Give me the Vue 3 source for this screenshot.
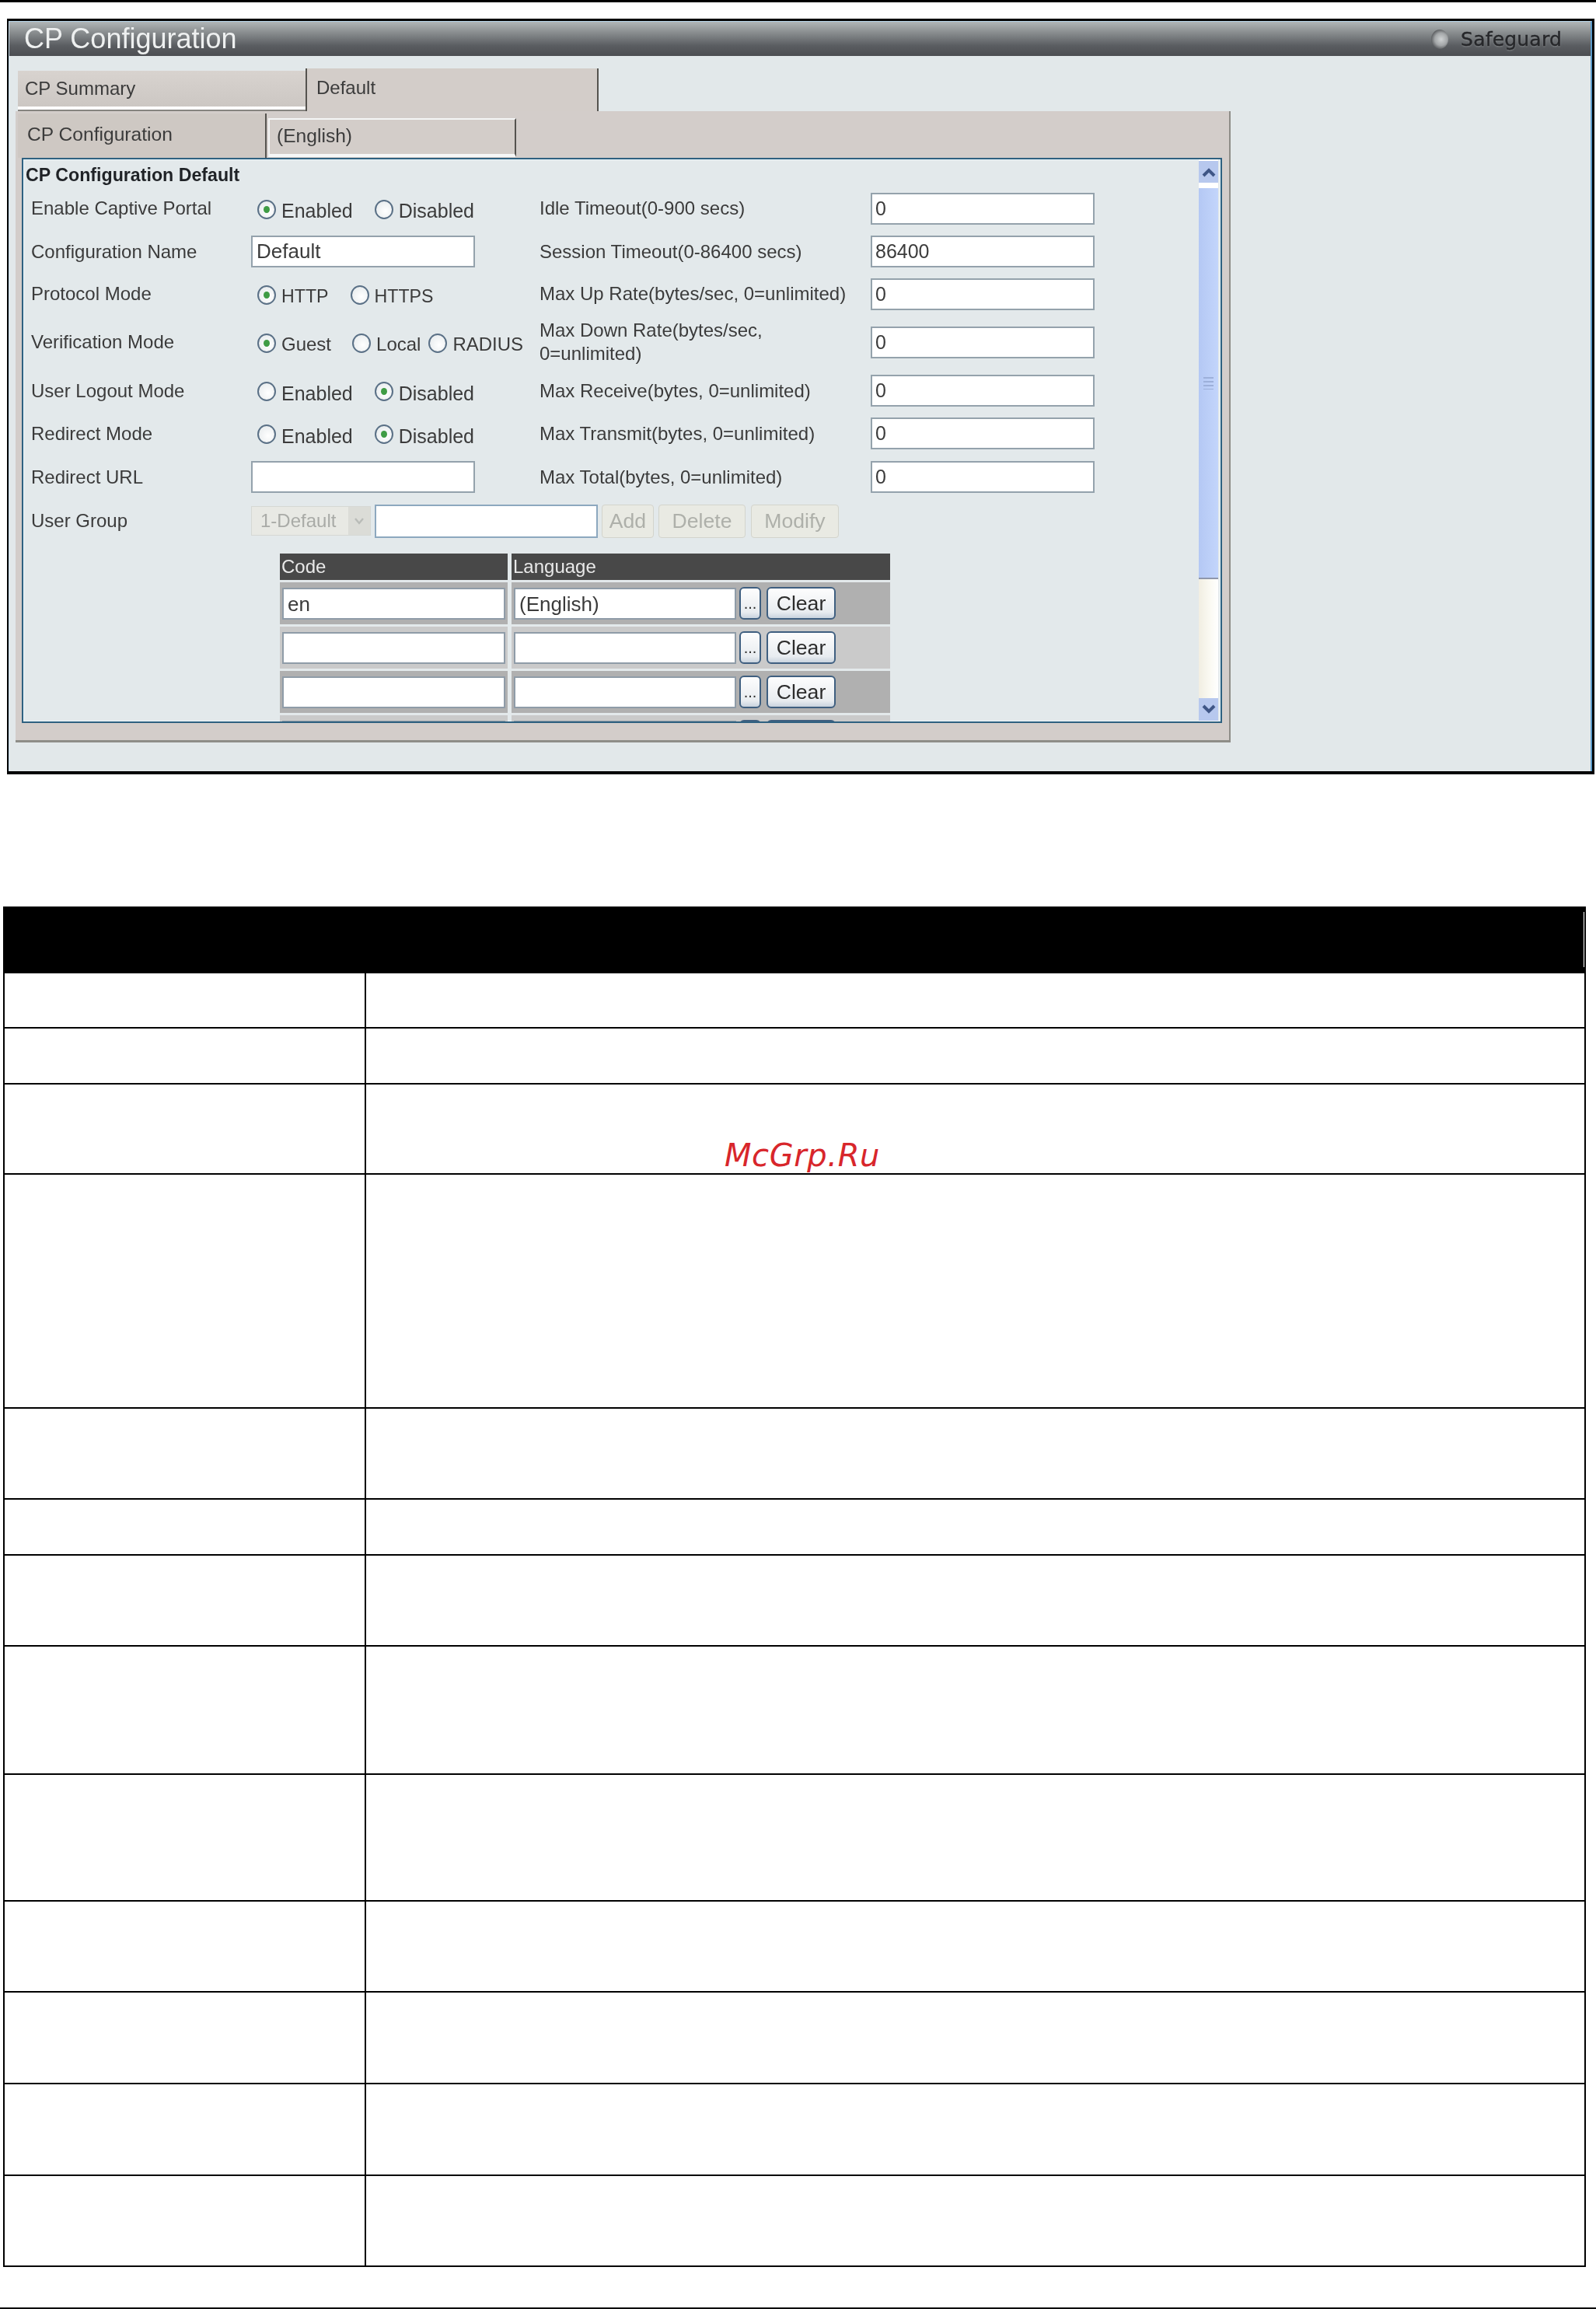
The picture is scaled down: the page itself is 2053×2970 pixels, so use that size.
<script setup>
const rightFields = [
  { label: 'Idle Timeout(0-900 secs)', value: '0' },
  { label: 'Session Timeout(0-86400 secs)', value: '86400' },
  { label: 'Max Up Rate(bytes/sec, 0=unlimited)', value: '0' },
  { label: 'Max Down Rate(bytes/sec,\n0=unlimited)', value: '0' },
  { label: 'Max Receive(bytes, 0=unlimited)', value: '0' },
  { label: 'Max Transmit(bytes, 0=unlimited)', value: '0' },
  { label: 'Max Total(bytes, 0=unlimited)', value: '0' },
]
const leftRows = [
  { label: 'Enable Captive Portal', radios: [{ t: 'Enabled', on: true }, { t: 'Disabled' }] },
  { label: 'Configuration Name', input: 'Default' },
  { label: 'Protocol Mode', cls: 'proto', radios: [{ t: 'HTTP', on: true }, { t: 'HTTPS' }] },
  { label: 'Verification Mode', cls: 'verify', radios: [{ t: 'Guest', on: true }, { t: 'Local' }, { t: 'RADIUS' }] },
  { label: 'User Logout Mode', radios: [{ t: 'Enabled' }, { t: 'Disabled', on: true }] },
  { label: 'Redirect Mode', radios: [{ t: 'Enabled' }, { t: 'Disabled', on: true }] },
  { label: 'Redirect URL', input: '' },
]
const formRows = leftRows.map((row, i) => ({ ...row, right: rightFields[i] }))
const langRows = [
  { code: 'en', lang: '(English)', dark: true },
  { code: '', lang: '' },
  { code: '', lang: '', dark: true },
  { code: '', lang: '' },
]
const docRows = [71, 72, 116, 301, 117, 72, 117, 165, 163, 117, 118, 118, 117]
</script>

<template>
  <div class="page">
    <div class="rule rule-top"></div>

    <section class="frame">
      <div class="frame-inner">
        <header class="titlebar">
          <h1 class="title">CP Configuration</h1>
          <div class="brand">
            <span class="brand-dot"></span>
            <span class="brand-text">Safeguard</span>
          </div>
        </header>

        <div class="tabs-main">
          <div class="tab tab-summary">CP Summary</div>
          <div class="tab tab-default">Default</div>
        </div>

        <div class="panel">
          <div class="tabs-sub">
            <div class="tab tab-conf">CP Configuration</div>
            <div class="tab tab-eng">(English)</div>
          </div>

          <div class="scroller">
            <div class="content">
              <div class="heading">CP Configuration Default</div>

              <div class="form">
                <template v-for="row in formRows" :key="row.label">
                  <div class="lbl">{{ row.label }}</div>
                  <div class="ctl">
                    <input v-if="row.input !== undefined" class="field field-left" :value="row.input" />
                    <div v-else class="radios" :class="row.cls">
                      <label v-for="r in row.radios" :key="r.t" class="radio">
                        <span class="dot" :class="{ on: r.on }"></span>
                        <span>{{ r.t }}</span>
                      </label>
                    </div>
                  </div>
                  <div class="lbl lbl-right">{{ row.right.label }}</div>
                  <div class="ctl">
                    <input class="field field-right" :value="row.right.value" />
                  </div>
                </template>
                <div class="lbl">User Group</div>
                <div class="ctl group-ctl">
                  <div class="select">
                    <span class="select-val">1-Default</span>
                    <span class="select-arrow">
                      <svg width="14" height="10" viewBox="0 0 14 10"><path d="M2 2l5 6 5-6" fill="none" stroke="#b9bcb8" stroke-width="2.4" /></svg>
                    </span>
                  </div>
                  <input class="field field-group" value="" />
                  <button class="btn-off btn-add" disabled>Add</button>
                  <button class="btn-off btn-del" disabled>Delete</button>
                  <button class="btn-off btn-mod" disabled>Modify</button>
                </div>
              </div>

              <div class="langs">
                <div class="lang-head">
                  <div class="lh lh-code">Code</div>
                  <div class="lh lh-lang">Language</div>
                </div>
                <div v-for="(r, i) in langRows" :key="i" class="lang-row" :class="{ dark: r.dark }">
                  <div class="lc lc-code">
                    <input class="field field-code" :value="r.code" />
                  </div>
                  <div class="lc lc-lang">
                    <input class="field field-lang" :value="r.lang" />
                    <button class="btn btn-more">...</button>
                    <button class="btn btn-clear">Clear</button>
                  </div>
                </div>
              </div>
            </div>

            <div class="scrollbar">
              <div class="sb-btn">
                <svg width="20" height="14" viewBox="0 0 20 14"><path d="M3 12l7-7 7 7" fill="none" stroke="#3f5686" stroke-width="4" /></svg>
              </div>
              <div class="sb-thumb"><span class="sb-grip"></span></div>
              <div class="sb-track"></div>
              <div class="sb-btn sb-btn-down">
                <svg width="20" height="14" viewBox="0 0 20 14"><path d="M3 2l7 7 7-7" fill="none" stroke="#3f5686" stroke-width="4" /></svg>
              </div>
            </div>
          </div>
        </div>
      </div>
    </section>

    <table class="doc">
      <thead>
        <tr class="doc-head"><th class="c1"></th><th class="c2"></th></tr>
      </thead>
      <tbody>
        <tr v-for="(h, i) in docRows" :key="i" :style="{ height: h + 'px' }">
          <td class="c1"></td>
          <td class="c2"></td>
        </tr>
      </tbody>
    </table>

    <div class="rule rule-bottom"></div>

    <div class="watermark">McGrp.Ru</div>
  </div>
</template>

<style>
html, body { margin: 0; background: #fff; }
</style>

<style scoped>
.page {
  position: relative;
  width: 2053px;
  height: 2970px;
  overflow: hidden;
  background: #fff;
  font-family: "Liberation Sans", Arial, sans-serif;
  color: #3b3b3b;
}
.rule { background: #000; }
.rule-top { height: 3px; }
.rule-bottom { height: 2px; margin-top: 52px; }

.frame {
  box-sizing: border-box;
  margin: 21px 0 0 9px;
  width: 2042px;
  height: 972px;
  border: solid #000;
  border-width: 3px 3px 4px 2px;
}
.frame-inner {
  box-sizing: border-box;
  height: 100%;
  background: #e2e8ea;
  border-top: 1px solid #b6d4e8;
  border-right: 2px solid #5b9ac9;
  border-left: 1px solid #c6dcec;
  filter: blur(0.5px);
}

.titlebar {
  height: 44px;
  display: flex;
  align-items: center;
  justify-content: space-between;
  padding: 0 37px 0 19px;
  background: linear-gradient(#b0b6b7 0%, #8b8f91 30%, #5a5d61 70%, #4c4e52 100%);
}
.title {
  margin: 0;
  font-size: 36px;
  font-weight: 400;
  color: #eef0f0;
  line-height: 44px;
}
.brand { display: flex; align-items: center; gap: 16px; }
.brand-dot {
  flex: none;
  width: 22px;
  height: 25px;
  border-radius: 50%;
  background: radial-gradient(circle at 58% 50%, #cfd2d3 0%, #a3a6a8 45%, #4c4e51 78%, #303236 100%);
}
.brand-text {
  font-family: "DejaVu Sans", sans-serif;
  font-size: 25px;
  line-height: 28px;
  letter-spacing: 0.2px;
  padding-top: 2px;
  color: #26272a;
  -webkit-text-stroke: 0.4px #26272a;
  text-shadow: 0 1px 2px #8d9092;
}

.tabs-main {
  display: flex;
  align-items: flex-end;
  height: 55px;
  margin: 16px 0 0 11px;
}
.tab {
  box-sizing: border-box;
  font-size: 24px;
  background: #d3cdc9;
  display: flex;
  align-items: center;
}
.tab-summary {
  width: 370px;
  height: 52px;
  padding: 0 0 4px 9px;
  background: linear-gradient(#d8d3cf, #cbc6c2);
  border-bottom: 2px solid #86847f;
  box-shadow: inset 0 -4px 0 #fff;
}
.tab-default {
  width: 377px;
  height: 55px;
  padding: 0 0 6px 12px;
  border-left: 2px solid #55534f;
  border-right: 2px solid #55534f;
}
.panel {
  box-sizing: border-box;
  margin-left: 8px;
  width: 1563px;
  height: 812px;
  padding-top: 3px;
  background: #d3cdca;
  border-right: 2px solid #8e8d88;
  border-bottom: 3px solid #8e8d88;
}
.tabs-sub {
  display: flex;
  align-items: flex-start;
  height: 57px;
  margin-left: 3px;
}
.tab-conf {
  width: 320px;
  height: 57px;
  font-size: 24.6px;
  padding: 0 0 4px 12px;
  background: #cec8c3;
  border-right: 2px solid #55534f;
}
.tab-eng {
  width: 319px;
  height: 50px;
  margin: 6px 0 0 2px;
  font-size: 24.6px;
  padding: 0 0 2px 9px;
  border-top: 2px solid #f4f5f5;
  border-left: 2px solid #f4f5f5;
  border-right: 2px solid #55534f;
  border-bottom: 4px solid #f6f7f7;
}

.scroller {
  box-sizing: border-box;
  display: flex;
  margin-left: 8px;
  width: 1544px;
  height: 727px;
  overflow: hidden;
  background: #e3e9eb;
  border: 2px solid #2f6180;
  box-shadow: inset 0 0 0 1px #e9f6fb;
}
.content {
  flex: 1;
  min-width: 0;
  overflow: hidden;
}
.heading {
  height: 35px;
  padding: 6px 0 0 3px;
  box-sizing: border-box;
  font-size: 23.2px;
  line-height: 28px;
  font-weight: 700;
  color: #1f2226;
}
.form {
  display: grid;
  grid-template-columns: 283px 371px 426px 288px;
  grid-template-rows: 56px 55px 54px 70px 55px 55px 57px 56px;
  align-items: center;
  margin-left: 10px;
}
.lbl {
  font-size: 24px;
  line-height: 30px;
  color: #3b3b3b;
}
.lbl-right { white-space: pre-line; }
.ctl { display: flex; align-items: center; }

.field {
  box-sizing: border-box;
  height: 41px;
  margin: 0;
  padding: 0 5px;
  background: #fff;
  border: 2px solid #94a2ac;
  border-radius: 0;
  outline: none;
  font-family: "Liberation Sans", Arial, sans-serif;
  font-size: 26px;
  color: #3b3b3b;
}
.field-left, .field-right { width: 288px; }
.field-right { font-size: 25px; padding-left: 4px; }
.field-group { width: 287px; height: 43px; margin-left: 5px; border-color: #8da8bf; }
.field-code { width: 287px; padding-top: 3px; border-color: #8f9ca8; }
.field-lang { width: 286px; padding-top: 3px; border-color: #8f9ca8; }

.radios {
  display: flex;
  gap: 28px;
  padding: 6px 0 0 8px;
}
.radio {
  display: flex;
  align-items: center;
  gap: 7px;
  font-size: 25px;
  line-height: 30px;
}
.radios.proto .radio { font-size: 23.2px; }
.radios.verify { gap: 27px; }
.radios.verify .radio { font-size: 24px; }
.radios.verify .radio:last-child { margin-left: -17px; }
.dot {
  box-sizing: border-box;
  flex: none;
  position: relative;
  width: 24px;
  height: 25px;
  margin-top: -4px;
  border-radius: 50%;
  border: 2px solid #5a7086;
  background: radial-gradient(circle at 60% 60%, #fff, #e3e8ea);
}
.dot.on::after {
  content: "";
  position: absolute;
  left: 6px;
  top: 6px;
  width: 8px;
  height: 9px;
  border-radius: 50%;
  background: #3f9c45;
}

.group-ctl { grid-column: 2 / 5; }
.select {
  box-sizing: border-box;
  display: flex;
  align-items: center;
  justify-content: space-between;
  width: 154px;
  height: 38px;
  background: #e8e9e4;
  border: 1px solid #d6d8d4;
  color: #a9aba7;
  font-size: 24px;
  padding-left: 11px;
}
.select-arrow {
  width: 28px;
  height: 36px;
  display: flex;
  align-items: center;
  justify-content: center;
  background: #dbdcd7;
}
.btn-off {
  box-sizing: border-box;
  height: 43px;
  padding: 0;
  background: #e9eae3;
  border: 1px solid #d3d4cc;
  border-radius: 4px;
  color: #aeb0aa;
  font-family: "Liberation Sans", Arial, sans-serif;
  font-size: 26.6px;
}
.btn-add { width: 67px; margin-left: 5px; }
.btn-del { width: 112px; margin-left: 6px; }
.btn-mod { width: 113px; margin-left: 7px; }

.langs { margin-left: 330px; margin-top: 14px; width: 785px; }
.lang-head { display: flex; gap: 5px; height: 34px; margin-bottom: 3px; }
.lh {
  background: #484848;
  color: #e9e9e9;
  font-size: 24px;
  line-height: 34px;
  padding-left: 2px;
  box-sizing: border-box;
}
.lh-code { width: 293px; }
.lh-lang { flex: 1; }
.lang-row { display: flex; gap: 5px; height: 54px; margin-bottom: 3px; }
.lc { background: #cacaca; display: flex; align-items: center; box-sizing: border-box; }
.dark .lc { background: #b0b0b0; }
.lc-code { width: 293px; padding-left: 3px; }
.lc-lang { flex: 1; padding-left: 3px; }
.btn {
  box-sizing: border-box;
  height: 42px;
  padding: 0;
  background: linear-gradient(#fdfdfd, #e8ecf0 80%, #c9d3de);
  border: 2px solid #3f5f80;
  border-radius: 6px;
  color: #2c2c2c;
  font-family: "Liberation Sans", Arial, sans-serif;
  font-size: 26.6px;
}
.btn-more { width: 28px; margin-left: 4px; font-size: 20px; }
.btn-clear { width: 89px; margin-left: 7px; }

.scrollbar {
  flex: none;
  width: 25px;
  margin-right: 3px;
  padding-top: 2px;
  display: flex;
  flex-direction: column;
  background: #fff;
}
.sb-btn {
  flex: none;
  height: 28px;
  display: flex;
  align-items: center;
  justify-content: center;
  background: #b7c8ee;
}
.sb-thumb {
  flex: none;
  height: 501px;
  margin-top: 7px;
  position: relative;
  background: linear-gradient(90deg, #b4c8f4, #c3d5fb);
  border-bottom: 2px solid #8f97ab;
}
.sb-grip {
  position: absolute;
  left: 6px;
  right: 6px;
  top: 243px;
  height: 16px;
  background: repeating-linear-gradient(#9db0da 0 2px, transparent 2px 5px);
}
.sb-track {
  flex: 1;
  background: linear-gradient(90deg, #f1eee2, #fbfaf3 60%, #fff);
}
.sb-btn-down { height: 29px; margin-bottom: 1px; }

.doc {
  box-sizing: border-box;
  margin: 170px 0 0 4px;
  width: 2036px;
  table-layout: fixed;
  border-collapse: separate;
  border-spacing: 0;
}
.doc-head { height: 86px; }
.doc th { background: #000; padding: 0; }
.doc th.c1 { width: 467px; }
.doc th.c2 { position: relative; }
.doc th.c2::after {
  content: "";
  position: absolute;
  right: 2px;
  top: 7px;
  bottom: 8px;
  width: 1px;
  background: #fff;
}
.doc td {
  padding: 0;
  border-bottom: 2px solid #000;
}
.doc td.c1 { border-left: 2px solid #000; border-right: 2px solid #000; }
.doc td.c2 { border-right: 2px solid #000; }
.watermark {
  position: absolute;
  left: 932px;
  top: 1462px;
  font-family: "DejaVu Sans", sans-serif;
  font-style: italic;
  font-size: 40px;
  line-height: 48px;
  letter-spacing: 0.6px;
  color: #d8262b;
}
</style>
